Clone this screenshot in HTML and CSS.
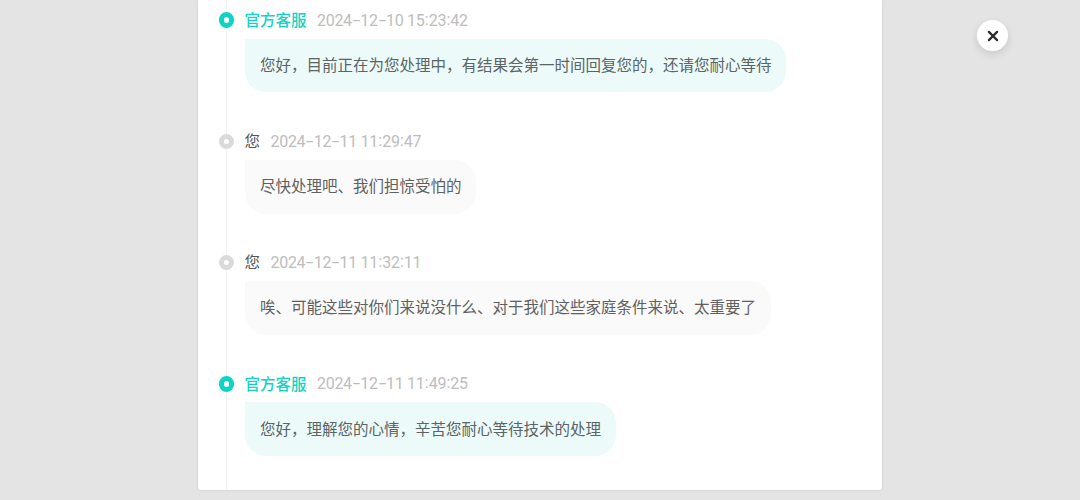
FILE: index.html
```
<!DOCTYPE html>
<html lang="zh-CN">
<head>
<meta charset="utf-8">
<title>客服</title>
<link rel="stylesheet" href="styles.css">
</head>
<body>
<main class="panel">
  <ol class="timeline">
    <li class="entry official">
      <div class="head"><i class="dot"></i><span class="name">官方客服</span><time class="date">2024<b>-</b>12<b>-</b>10 15<i>:</i>23<i>:</i>42</time></div>
      <p class="bubble">您好，目前正在为您处理中，有结果会第一时间回复您的，还请您耐心等待</p>
    </li>
    <li class="entry">
      <div class="head"><i class="dot"></i><span class="name">您</span><time class="date">2024<b>-</b>12<b>-</b>11 11<i>:</i>29<i>:</i>47</time></div>
      <p class="bubble">尽快处理吧、我们担惊受怕的</p>
    </li>
    <li class="entry">
      <div class="head"><i class="dot"></i><span class="name">您</span><time class="date">2024<b>-</b>12<b>-</b>11 11<i>:</i>32<i>:</i>11</time></div>
      <p class="bubble">唉、可能这些对你们来说没什么、对于我们这些家庭条件来说、太重要了</p>
    </li>
    <li class="entry official">
      <div class="head"><i class="dot"></i><span class="name">官方客服</span><time class="date">2024<b>-</b>12<b>-</b>11 11<i>:</i>49<i>:</i>25</time></div>
      <p class="bubble">您好，理解您的心情，辛苦您耐心等待技术的处理</p>
    </li>
  </ol>
</main>
<button class="close" aria-label="关闭"><svg width="12" height="12" viewBox="0 0 12 12"><path d="M1.9 1.9 10.1 10.1M10.1 1.9 1.9 10.1" fill="none" stroke="#2b2b2b" stroke-width="2.2" stroke-linecap="round"/></svg></button>
</body>
</html>
```
FILE: styles.css
```
* { box-sizing: border-box; }
body {
  margin: 0;
  height: 500px;
  overflow: hidden;
  background: #e4e4e4;
  font: 15.5px/22px "Noto Sans CJK SC", sans-serif;
}
.panel {
  width: 684px;
  height: 490px;
  margin: 0 auto;
  overflow: hidden;
  background: #fff;
  border-radius: 0 0 2px 2px;
  box-shadow: 0 0 3px rgba(0, 0, 0, 0.1);
}
.timeline {
  height: 490px;
  margin: 0 0 0 28px;
  padding: 9px 0 0 18px;
  border-left: 1px solid #f2f2f2;
  list-style: none;
}
.entry { height: 121.3px; }
.head {
  display: flex;
  align-items: center;
  height: 22px;
  margin-left: -26.2px;
}
.dot {
  width: 15.6px;
  height: 15.6px;
  margin-right: 10.2px;
  border: 5.2px solid #dadada;
  border-radius: 50%;
  background: #fff;
}
.name {
  padding-bottom: 2.3px;
  color: #555;
}
.date {
  margin-left: 10.4px;
  padding-top: 1px;
  color: #bdbdbd;
  font-family: Roboto, "Noto Sans CJK SC", sans-serif;
  font-size: 16px;
  letter-spacing: -0.29px;
  white-space: nowrap;
}
.date b {
  display: inline-block;
  width: 8.4px;
  font-weight: 400;
  transform: scaleX(1.7);
  text-align: center;
}
.date i {
  display: inline-block;
  width: 4.2px;
  font-style: normal;
  text-align: center;
  transform: translateY(-1px);
}
.bubble {
  width: fit-content;
  height: 53.8px;
  margin: 7.6px 0 0;
  padding: 14.3px 14.8px 15.5px 15px;
  border-radius: 0 21px 21px 21px;
  background: #fafafa;
  color: #606060;
  white-space: nowrap;
}
.official .dot { border-color: #0cd5c3; }
.official .name { color: #12d3c4; font-weight: 500; }
.official .bubble { background: #ecfafa; color: #5a6564; }
.close {
  position: absolute;
  top: 20px;
  left: 977px;
  display: grid;
  place-items: center;
  width: 31px;
  height: 31px;
  padding: 0;
  border: 0;
  border-radius: 50%;
  background: #fff;
  box-shadow: 0 3px 9px rgba(0, 0, 0, 0.12);
}
```
